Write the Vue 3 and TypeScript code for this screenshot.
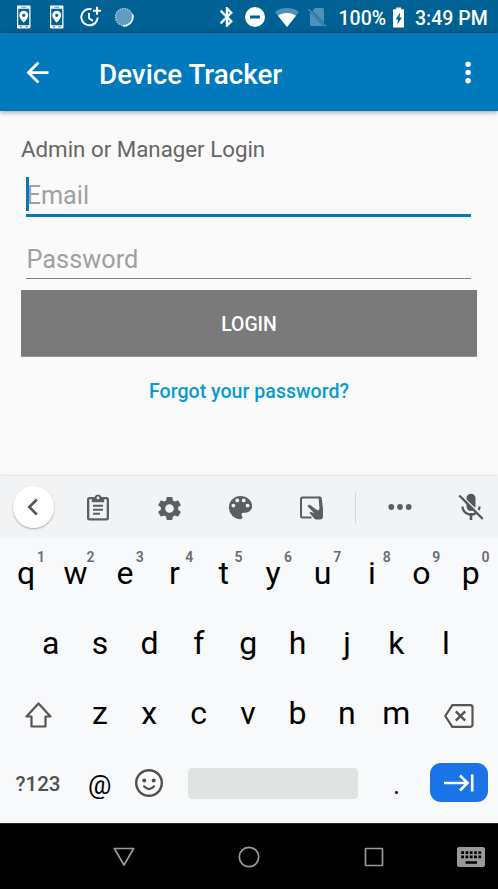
<script setup lang="ts">
import { ref } from 'vue'

interface Key {
  char: string
  hint?: string
}

const topRow: Key[] = 'qwertyuiop'.split('').map((char, i) => ({ char, hint: String((i + 1) % 10) }))
const middleRow: Key[] = 'asdfghjkl'.split('').map((char) => ({ char }))
const bottomRow: Key[] = 'zxcvbnm'.split('').map((char) => ({ char }))

const email = ref('')
const password = ref('')
</script>

<template>
  <div class="screen">
    <div class="status">
      <svg v-for="n in 2" :key="n" class="phone" viewBox="0 0 14 24">
        <path fill="#fff" fill-rule="evenodd" d="M1 0h12q1 0 1 1v22q0 1-1 1H1q-1 0-1-1V1q0-1 1-1zM1.300 3.500v17h11.400v-17zM4.500 1.300v.9h5v-.9zM3 21.700v1h2v-1zm6 0v1h2v-1z" />
        <path fill="#fff" fill-rule="evenodd" d="M7 5.500a4.600 4.600 0 0 0-4.600 4.700C2.400 13.300 7 18 7 18s4.600-4.700 4.600-7.800A4.600 4.600 0 0 0 7 5.500zm0 3a1.700 1.700 0 1 1 0 3.400 1.700 1.700 0 0 1 0-3.400z" />
      </svg>
      <svg class="clock" viewBox="0 0 22 22">
        <path fill="none" stroke="#fff" stroke-width="2" d="M11.500 3.200A8.200 8.200 0 1 0 17.700 11.500M9 7v5.300l4 2.500" />
        <path fill="none" stroke="#fff" stroke-width="2" d="M17 .8v8M13 4.800h8" />
      </svg>
      <svg class="sync" viewBox="0 0 20 20">
        <circle cx="10" cy="10" r="9" fill="#619dc1" />
        <circle cx="10" cy="10" r="8.400" fill="none" stroke="#a3c6da" stroke-width="1.500" stroke-dasharray="1.200 1.300" />
        <path fill="none" stroke="#e9f3f8" stroke-width="1.700" stroke-linecap="round" d="M18.600 7.500A9 9 0 0 1 9.500 18.900" />
      </svg>
      <span class="spacer"></span>
      <svg class="bluetooth" viewBox="5 2 13 20" preserveAspectRatio="none">
        <path fill="#fff" stroke="#fff" stroke-width=".4" d="M17.710 7.710L12 2h-1v7.590L6.410 5 5 6.410 10.590 12 5 17.590 6.410 19 11 14.410V22h1l5.710-5.710-4.300-4.290 4.300-4.290zM13 5.830l1.880 1.880L13 9.590V5.830zm1.880 10.460L13 18.170v-3.760l1.880 1.880z" />
      </svg>
      <svg class="dnd" viewBox="0 0 20 20">
        <path fill="#fff" fill-rule="evenodd" d="M10 0a10 10 0 1 0 0 20 10 10 0 0 0 0-20zM5 8.500h10v3H5z" />
      </svg>
      <svg class="wifi" viewBox="0 0 24 19">
        <path fill="#4f92b9" d="M12 0C7.300 0 3 1.500 0 4l12 15L24 4C21 1.500 16.700 0 12 0z" />
        <path fill="#fff" d="M12 5C8.700 5 5.500 6 3 7.800L12 19l9-11.200C18.500 6 15.300 5 12 5z" />
      </svg>
      <svg class="sim" viewBox="0 0 18 19">
        <path fill="#4f92b9" d="M7 0h7.500q1.500 0 1.500 1.500v13.200L4.300 3zM2 4.300L15 17.500q-.3.500-1 .5H3.500Q2 18 2 16.500z" />
        <path stroke="#4f92b9" stroke-width="1.500" d="M.5 1.300l17 17" />
      </svg>
      <span class="percent">100%</span>
      <svg class="battery" viewBox="0 0 12 21">
        <path fill="#fff" fill-rule="evenodd" d="M3.500 0h5v2H11q1 0 1 1v17q0 1-1 1H1q-1 0-1-1V3q0-1 1-1h2.500zM7.600 5L2.800 12.500h2.500L4.600 18 9.200 10.500H6.800z" />
      </svg>
      <span class="time">3:49 PM</span>
    </div>

    <header class="appbar">
      <svg class="back" viewBox="0 0 24 24">
        <path fill="#fff" d="M20 11H7.830l5.590-5.590L12 4l-8 8 8 8 1.410-1.410L7.830 13H20v-2z" />
      </svg>
      <h1>Device Tracker</h1>
      <svg class="more" viewBox="0 0 6 24">
        <circle cx="3" cy="6" r="2" fill="#fff" />
        <circle cx="3" cy="12" r="2" fill="#fff" />
        <circle cx="3" cy="18" r="2" fill="#fff" />
      </svg>
    </header>

    <main class="form">
      <p class="caption">Admin or Manager Login</p>
      <div class="field focused">
        <i class="caret"></i>
        <input v-model="email" type="text" placeholder="Email" />
      </div>
      <div class="field second">
        <input v-model="password" type="password" placeholder="Password" />
      </div>
      <button class="login" type="button">LOGIN</button>
      <a class="forgot">Forgot your password?</a>
    </main>

    <section class="keyboard">
      <div class="tools">
        <span class="collapse">
          <svg viewBox="0 0 12 18"><path fill="none" stroke="#55585b" stroke-width="2.600" d="M9.800 1.500L2.300 9l7.500 7.500" /></svg>
        </span>
        <span class="tool">
          <svg width="22" height="27" viewBox="0 0 22 27">
            <path fill="#5c5f61" fill-rule="evenodd" d="M2.500 3h5a3.700 3.700 0 0 1 7 0h5Q22 3 22 5.500v18.500q0 2.500-2.500 2.500h-17Q0 26.500 0 24V5.500Q0 3 2.500 3zM2.300 5.300v18.900h17.400V5.300h-2.500v3H4.800v-3zM11 2.500a1.400 1.400 0 1 0 0 2.800 1.400 1.400 0 0 0 0-2.800z" />
            <path stroke="#5c5f61" stroke-width="2" d="M6 11.800h10M6 15.800h10M6 19.800h7" />
          </svg>
        </span>
        <span class="tool gear">
          <svg width="29" height="29" viewBox="0 0 24 24">
            <path fill="#5c5f61" d="M19.140 12.940c.04-.3.060-.61.060-.94 0-.32-.02-.64-.07-.94l2.030-1.580c.18-.14.230-.41.120-.61l-1.920-3.320c-.12-.22-.37-.29-.59-.22l-2.390.96c-.5-.38-1.030-.7-1.620-.94l-.36-2.540c-.04-.24-.24-.41-.48-.41h-3.840c-.24 0-.43.170-.47.410l-.36 2.540c-.59.240-1.130.570-1.620.940l-2.390-.96c-.22-.08-.47 0-.59.220L2.740 8.870c-.12.210-.08.470.12.610l2.030 1.580c-.05.300-.09.630-.09.940s.02.640.07.940l-2.030 1.580c-.18.140-.23.410-.12.610l1.920 3.320c.12.220.37.290.59.220l2.390-.96c.5.380 1.030.700 1.620.940l.36 2.540c.05.240.24.410.48.410h3.840c.24 0 .44-.17.470-.41l.36-2.540c.59-.24 1.130-.56 1.620-.94l2.390.96c.22.080.47 0 .59-.22l1.920-3.320c.12-.22.070-.47-.12-.61l-2.010-1.580zM12 15.600c-1.980 0-3.600-1.620-3.600-3.600s1.620-3.600 3.600-3.600 3.600 1.620 3.600 3.600-1.620 3.600-3.600 3.600z" />
          </svg>
        </span>
        <span class="tool">
          <svg width="31" height="31" viewBox="0 0 24 24">
            <path fill="#5c5f61" d="M12 3a9 9 0 0 0 0 18c.83 0 1.500-.67 1.500-1.500 0-.39-.15-.74-.39-1.010-.23-.26-.38-.61-.38-.99 0-.83.670-1.500 1.500-1.500H16c2.760 0 5-2.240 5-5 0-4.420-4.030-8-9-8zm-5.500 9a1.500 1.500 0 1 1 0-3 1.500 1.500 0 0 1 0 3zm3-4a1.500 1.500 0 1 1 0-3 1.500 1.500 0 0 1 0 3zm5 0a1.500 1.500 0 1 1 0-3 1.500 1.500 0 0 1 0 3zm3 4a1.500 1.500 0 1 1 0-3 1.500 1.500 0 0 1 0 3z" />
          </svg>
        </span>
        <span class="tool handoff">
          <svg width="23" height="24" viewBox="0 0 23 24">
            <path fill="none" stroke="#5c5f61" stroke-width="2" d="M11.500 21.500H2.500Q1 21.500 1 20V3Q1 1.500 2.500 1.500H19.500" />
            <path fill="#5c5f61" d="M18.500.5h1.500q1.500 0 1.700 1.500L23 13v7.500q0 3-3 3h-3.500q-1.500 0-2.500-1.300L9.500 17l1-1.200 3.800 1.500-6.800-7q.2-2.200 2.500-1.200l7.800 5.400 1.700-1.500z" />
          </svg>
        </span>
        <i class="divider"></i>
        <span class="tool">
          <svg width="24" height="6" viewBox="0 0 24 6" fill="#5c5f61"><circle cx="3.300" cy="3" r="2.900" /><circle cx="12" cy="3" r="2.900" /><circle cx="20.700" cy="3" r="2.900" /></svg>
        </span>
        <span class="tool">
          <svg width="26" height="28" viewBox="0 0 26 28">
            <path fill="#55585b" d="M8.500 5.300a4.500 4.500 0 0 1 9 0V13q0 1-.4 1.800L8.500 6.500zM8.500 10.500l7 6.700q-1.200.8-2.500.8a4.500 4.500 0 0 1-4.500-4.500zM11.700 20h2.600v7h-2.600z" />
            <path fill="none" stroke="#55585b" stroke-width="2.300" d="M4.500 13.500a8.500 8.500 0 0 0 13.500 6.500M21.500 13.500q0 1.800-.8 3.400" />
            <path stroke="#55585b" stroke-width="2.400" d="M1.300 2.500l23.500 23.500" />
          </svg>
        </span>
      </div>

      <div class="row ten">
        <span v-for="k in topRow" :key="k.char" class="key">{{ k.char }}<sup class="hint">{{ k.hint }}</sup></span>
      </div>
      <div class="row nine">
        <span v-for="k in middleRow" :key="k.char" class="key">{{ k.char }}</span>
      </div>
      <div class="row seven">
        <span class="key shift">
          <svg width="27" height="26" viewBox="0 0 27 26"><path fill="none" stroke="#555" stroke-width="2.200" stroke-linejoin="round" d="M13.500 1.500L1.500 14.500h5v10h14v-10h5z" /></svg>
        </span>
        <span v-for="k in bottomRow" :key="k.char" class="key">{{ k.char }}</span>
        <span class="key erase">
          <svg width="30" height="24" viewBox="0 0 30 24"><path fill="none" stroke="#555" stroke-width="2.200" stroke-linejoin="round" d="M8.300 1.200h18q2.200 0 2.200 2.200v17.200q0 2.200-2.200 2.200h-18L1.300 12z" /><path stroke="#555" stroke-width="2.500" d="M11.800 7.300l9.400 9.400M21.200 7.300l-9.400 9.400" /></svg>
        </span>
      </div>
      <div class="row last">
        <span class="key symbols">?123</span>
        <span class="key at">@</span>
        <span class="key emoji">
          <svg width="28" height="28" viewBox="0 0 28 28"><circle cx="14" cy="14" r="12.800" fill="none" stroke="#505050" stroke-width="2.400" /><circle cx="9.300" cy="11.500" r="2" fill="#505050" /><circle cx="18.700" cy="11.500" r="2" fill="#505050" /><path fill="none" stroke="#505050" stroke-width="2.200" stroke-linecap="round" d="M9 17.300q5 5.500 10 0" /></svg>
        </span>
        <span class="key"><i class="space"></i></span>
        <span class="key period">.</span>
        <span class="key enter-cell">
          <span class="enter"><svg width="30" height="18" viewBox="0 0 30 18"><path fill="none" stroke="#fff" stroke-width="2.600" d="M0 9h24M16 1.500L23.500 9 16 16.500M28.200 .5v17" /></svg></span>
        </span>
      </div>
    </section>

    <nav class="nav">
      <span><svg width="22" height="20" viewBox="0 0 22 20"><path fill="none" stroke="#999" stroke-width="1.700" stroke-linejoin="round" d="M1.300 1.500h19.400L11 18z" /></svg></span>
      <span><svg width="22" height="22" viewBox="0 0 22 22"><circle cx="11" cy="11" r="9.700" fill="none" stroke="#999" stroke-width="1.700" /></svg></span>
      <span><svg width="20" height="20" viewBox="0 0 20 20"><rect x="1.500" y="1.500" width="17" height="17" rx=".5" fill="none" stroke="#999" stroke-width="1.700" /></svg></span>
      <span class="ime">
        <svg width="28" height="20" viewBox="0 0 28 20">
          <rect width="28" height="20" rx="2" fill="#999" />
          <path stroke="#000" stroke-width="2.700" stroke-dasharray="2.800 1.500" d="M4.200 5.600h20M4.200 9.800h20" />
          <path stroke="#000" stroke-width="2.500" d="M8.500 15.500h11.500" />
        </svg>
      </span>
    </nav>
  </div>
</template>

<style>
body {
  margin: 0;
  overflow: hidden;
}
</style>

<style scoped>
.screen {
  display: flex;
  flex-direction: column;
  width: 498px;
  height: 889px;
  overflow: hidden;
  background: #fafafa;
  font-family: Roboto, sans-serif;
}
svg {
  display: block;
  flex: none;
}
.status {
  display: flex;
  align-items: center;
  box-sizing: border-box;
  height: 33px;
  padding: 1px 11px 0 17px;
  background: #006194;
  color: #fff;
  font-size: 19.5px;
  line-height: 33px;
  font-weight: 500;
}
.phone {
  width: 13.5px;
  height: 24px;
  margin-right: 19.800px;
}
.clock {
  width: 22px;
  height: 22px;
  margin: 0 11.500px 0 -3.500px;
}
.sync {
  width: 20px;
  height: 20px;
}
.spacer {
  flex: 1;
}
.bluetooth {
  width: 13px;
  height: 20px;
  margin-right: 12px;
}
.dnd {
  width: 20px;
  height: 20px;
  margin-right: 10px;
}
.wifi {
  width: 24px;
  height: 19px;
  margin-right: 9px;
}
.sim {
  width: 18px;
  height: 19px;
  margin-right: 13px;
}
.percent {
  width: 47px;
  padding-top: 2px;
}
.battery {
  width: 11.5px;
  height: 21px;
  margin: 0 11px 0 7px;
}
.time {
  width: 72px;
  padding-top: 2px;
  white-space: nowrap;
}
.appbar {
  display: flex;
  align-items: center;
  position: relative;
  box-sizing: border-box;
  height: 78px;
  padding: 0 25.500px 0 21px;
  background: #007abc;
  box-shadow: 0 1px 5px rgba(0, 0, 0, 0.4);
}
.back {
  width: 33px;
  height: 33px;
}
h1 {
  flex: 1;
  margin: 0 0 0 45px;
  padding-top: 5px;
  color: #fff;
  font-size: 27.8px;
  font-weight: 500;
  line-height: 36px;
}
.more {
  width: 8.250px;
  height: 33px;
}
.form {
  display: flex;
  flex-direction: column;
  flex: 1;
  padding: 23px 21px 0;
}
.caption {
  margin: 0;
  color: #666;
  font-size: 22.3px;
  line-height: 31px;
}
.field {
  display: flex;
  align-items: center;
  box-sizing: border-box;
  height: 52px;
  margin: 0 6px 0 5px;
}
.focused {
  position: relative;
  border-bottom: 3px solid #007abc;
  padding-top: 13px;
}
.second {
  height: 62px;
  padding-top: 24px;
  border-bottom: 1.500px solid #808080;
}
.caret {
  position: absolute;
  left: 0;
  top: 12px;
  width: 3px;
  height: 34px;
  background: #007abc;
}
input {
  width: 100%;
  padding: 0 0 0 .5px;
  border: 0;
  outline: 0;
  background: transparent;
  font-family: inherit;
  font-size: 25.3px;
  line-height: 30px;
}
input::placeholder {
  color: #a0a0a0;
  opacity: 1;
}
.login {
  height: 67px;
  margin-top: 11px;
  padding: 2px 0 0;
  border: 0;
  border-bottom: 1px solid #969696;
  background: #7a7a7a;
  color: #fff;
  font-family: inherit;
  font-size: 19.4px;
  font-weight: 500;
}
.forgot {
  margin-top: 20px;
  color: #0a9ad0;
  font-size: 19.6px;
  font-weight: 500;
  line-height: 30px;
  text-align: center;
}
.keyboard {
  height: 347px;
  background: #f8f9fb;
  box-shadow: 0 0 3px rgba(0, 0, 0, 0.2);
}
.tools {
  display: flex;
  align-items: center;
  height: 62px;
  padding-left: 12.500px;
  background: #f1f3f4;
}
.collapse {
  display: flex;
  align-items: center;
  justify-content: center;
  flex: none;
  width: 41.500px;
  height: 41.500px;
  margin-right: 8.500px;
  border-radius: 50%;
  background: #fff;
  box-shadow: 0 1px 2px rgba(0, 0, 0, 0.3);
}
.collapse svg {
  width: 12px;
  height: 18px;
}
.tool {
  display: flex;
  align-items: center;
  justify-content: center;
  flex: none;
  box-sizing: border-box;
  width: 71px;
}
.gear {
  padding-top: 2px;
}
.handoff {
  padding: 1px 0 0;
}
.divider {
  flex: none;
  width: 1px;
  height: 31px;
  margin: 0 8.500px;
  background: #d3d5d7;
}
.row {
  display: grid;
  grid-template-rows: 70px;
  height: 70px;
  padding: 0 1.500px;
  line-height: 40px;
}
.ten {
  grid-template-columns: repeat(10, 49.400px);
}
.nine {
  grid-template-columns: repeat(9, 49.400px);
  padding-left: 26px;
}
.seven {
  grid-template-columns: 73.700px repeat(7, 49.400px) 74.500px;
}
.last {
  grid-template-columns: 74.100px 49.400px 49.400px 197.600px 49.400px 74.100px;
}
.key {
  display: flex;
  position: relative;
  align-items: center;
  justify-content: center;
  box-sizing: border-box;
  color: #000;
  font-size: 32px;
}
.shift {
  padding-top: 4px;
}
.erase {
  padding: 6px 0 0 1px;
}
.hint {
  position: absolute;
  left: 35.500px;
  top: 10px;
  color: #6a6d6f;
  font-size: 14px;
  font-weight: 600;
  line-height: 18px;
}
.symbols {
  padding: 1px 1px 0 0;
  color: #505050;
  font-size: 20.5px;
  font-weight: 500;
}
.at {
  padding: 3px 1px 0 0;
  font-size: 26px;
}
.emoji {
  padding-right: 2px;
}
.period {
  padding-top: 3px;
  font-size: 27px;
}
.space {
  width: 170px;
  height: 31px;
  border-radius: 4px;
  background: #e1e3e2;
}
.enter-cell {
  padding: 0 0 1px 2px;
}
.enter {
  display: flex;
  align-items: center;
  justify-content: center;
  width: 58px;
  height: 39px;
  border-radius: 11px;
  background: #1b73e8;
}
.nav {
  display: flex;
  align-items: center;
  box-sizing: border-box;
  height: 66px;
  padding-left: 61.500px;
  background: #000;
  border-top: 1px solid #252525;
}
.nav span {
  display: flex;
  flex: none;
  justify-content: center;
  width: 125px;
}
.nav .ime {
  width: 69px;
}
</style>
